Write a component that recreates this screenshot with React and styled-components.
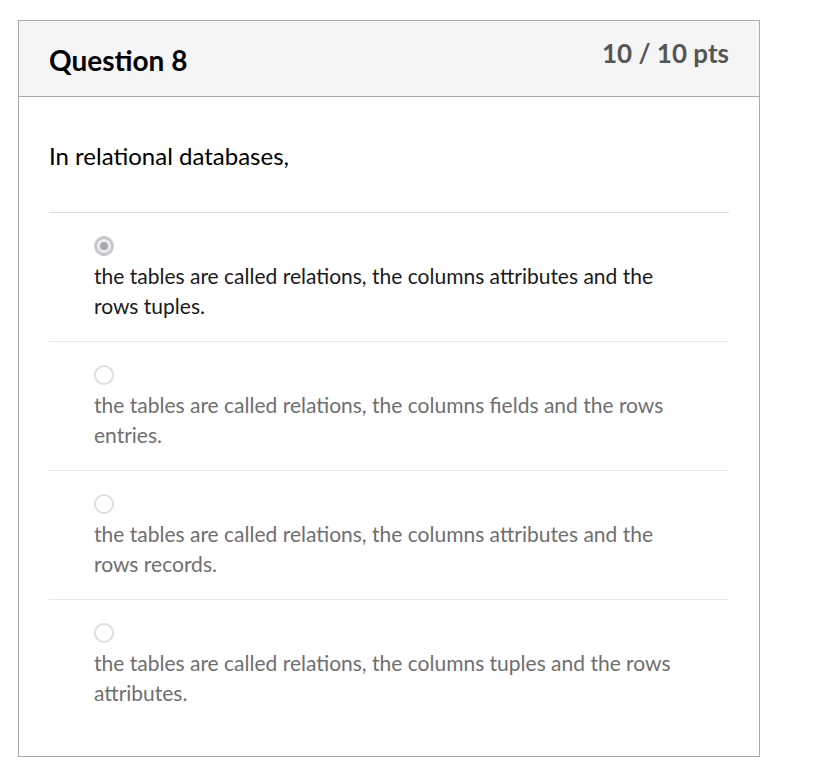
import React from "react";
import styled, { createGlobalStyle } from "styled-components";

const GlobalStyle = createGlobalStyle`
  body {
    margin: 8px;
    background: #ffffff;
    font-family: Lato, "Open Sans", sans-serif;
  }
`;

const Card = styled.div`
  margin: 12px 0 0 10px;
  width: 740px;
  height: 735px;
  border: 1px solid #aaaaaa;
  background: #ffffff;
  box-sizing: content-box;
`;

const Header = styled.header`
  height: 75px;
  background-color: #f5f5f5;
  border-bottom: 1px solid #aaaaaa;
  padding: 0 30px;
  display: flex;
  justify-content: space-between;
  align-items: flex-start;
`;

const Title = styled.h2`
  margin: 0;
  padding-top: 22px;
  font-size: 28px;
  line-height: 34px;
  font-weight: 700;
  color: #000000;
`;

const Points = styled.div`
  padding-top: 17px;
  font-size: 26px;
  line-height: 31px;
  font-weight: 700;
  color: #555555;
`;

const Body = styled.div`
  padding: 0 30px;
`;

const QuestionText = styled.p`
  margin: 0;
  padding: 44px 0 41px;
  font-size: 24px;
  line-height: 30px;
  color: #000000;
  border-bottom: 1px solid #dddddd;
`;

const Answer = styled.div`
  padding: 23px 40px 20px 45px;
  border-bottom: ${(p) => (p.last ? "none" : "1px solid #e8e8e8")};
  display: flex;
  flex-direction: column;
  align-items: flex-start;
  gap: 5px;
`;

const Radio = styled.span`
  width: 20px;
  height: 20px;
  border-radius: 50%;
  box-sizing: border-box;
  border: ${(p) => (p.checked ? "3px solid #c6c6cb" : "2px solid #dedee0")};
  background: ${(p) => (p.checked ? "#ececef" : "#ffffff")};
  display: flex;
  align-items: center;
  justify-content: center;

  &::after {
    content: "";
    display: ${(p) => (p.checked ? "block" : "none")};
    width: 8px;
    height: 8px;
    border-radius: 50%;
    background: #a7a7af;
  }
`;

const AnswerText = styled.div`
  font-size: 21px;
  line-height: 30px;
  color: ${(p) => (p.checked ? "#1a1a1a" : "#6f6f6f")};
`;

const answers = [
  "the tables are called relations, the columns attributes and the rows tuples.",
  "the tables are called relations, the columns fields and the rows entries.",
  "the tables are called relations, the columns attributes and the rows records.",
  "the tables are called relations, the columns tuples and the rows attributes.",
];

function App() {
  return (
    <>
      <GlobalStyle />
      <Card>
        <Header>
          <Title>Question 8</Title>
          <Points>10 / 10 pts</Points>
        </Header>
        <Body>
          <QuestionText>In relational databases,</QuestionText>
          {answers.map((text, i) => (
            <Answer key={i} last={i === answers.length - 1}>
              <Radio checked={i === 0} />
              <AnswerText checked={i === 0}>{text}</AnswerText>
            </Answer>
          ))}
        </Body>
      </Card>
    </>
  );
}

export default App;
